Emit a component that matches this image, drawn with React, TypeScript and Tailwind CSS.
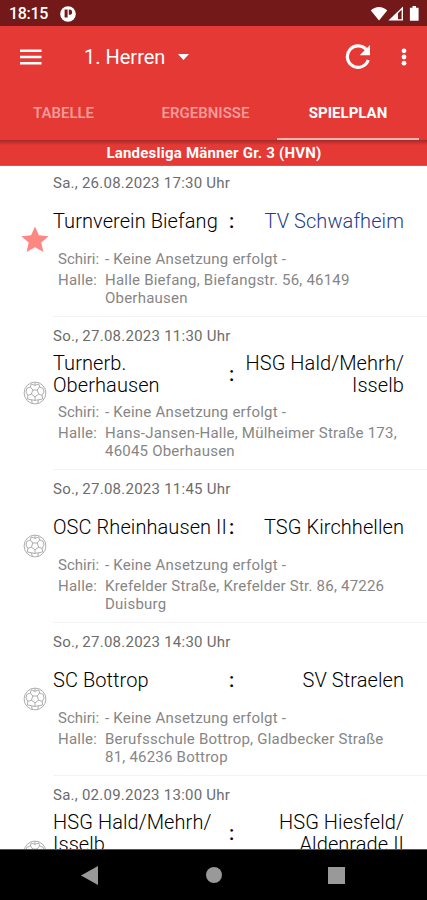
import { clsx } from "clsx";

type Match = {
  date: string;
  home: string[];
  away: string[];
  hall: string[];
  favorite?: boolean;
};

const matches: Match[] = [
  {
    date: "Sa., 26.08.2023 17:30 Uhr",
    home: ["Turnverein Biefang"],
    away: ["TV Schwafheim"],
    hall: ["Halle Biefang, Biefangstr. 56, 46149", "Oberhausen"],
    favorite: true,
  },
  {
    date: "So., 27.08.2023 11:30 Uhr",
    home: ["Turnerb.", "Oberhausen"],
    away: ["HSG Hald/Mehrh/", "Isselb"],
    hall: ["Hans-Jansen-Halle, Mülheimer Straße 173,", "46045 Oberhausen"],
  },
  {
    date: "So., 27.08.2023 11:45 Uhr",
    home: ["OSC Rheinhausen II"],
    away: ["TSG Kirchhellen"],
    hall: ["Krefelder Straße, Krefelder Str. 86, 47226", "Duisburg"],
  },
  {
    date: "So., 27.08.2023 14:30 Uhr",
    home: ["SC Bottrop"],
    away: ["SV Straelen"],
    hall: ["Berufsschule Bottrop, Gladbecker Straße", "81, 46236 Bottrop"],
  },
  {
    date: "Sa., 02.09.2023 13:00 Uhr",
    home: ["HSG Hald/Mehrh/", "Isselb"],
    away: ["HSG Hiesfeld/", "Aldenrade II"],
    hall: [],
  },
];

function StarIcon() {
  return (
    <svg width="28" height="28" viewBox="0 0 28 28" fill="#fe8782">
      <path d="M14 .4l3.9 8.9 9.7.9-7.3 6.4 2.1 9.5-8.4-4.9-8.4 4.9 2.1-9.5L.4 10.2l9.7-.9z" />
    </svg>
  );
}

function BallIcon() {
  return (
    <svg width="24" height="24" viewBox="0 0 24 24" fill="none" stroke="#999" strokeWidth="0.8">
      <circle cx="12" cy="12" r="10.9" />
      <path d="M12 15.8L8.4 13.2 9.8 9h4.4l1.4 4.2z" />
      <path d="M9.8 9L7.4 6M14.2 9l2.4-3M15.6 13.2l3.6 1.2M12 15.8v3.6M8.4 13.2l-3.6 1.2" />
      <path d="M7.4 6L8.2 2.9 12 4.4l3.8-1.5.8 3.1 3.6 1.4M7.4 6L3.8 7.4M12 4.4V1.3M4.8 14.4L3 11l.8-3.6M4.8 14.4L4.4 18l4.2.8 3.4.6 3.4-.6 4.2-.8-.4-3.6L21 11l-.8-3.6M8.6 18.8l.6 3.6M15.4 18.8l-.6 3.6" />
    </svg>
  );
}

function StatusBar() {
  return (
    <div className="flex h-[26px] shrink-0 items-center bg-[#741919] pt-[2px] pl-[9px] pr-[7px] text-white">
      <span className="w-[51px] text-[16px] font-medium leading-none tracking-[-0.3px]">18:15</span>
      <svg width="16" height="16" viewBox="0 0 16 16">
        <circle cx="8" cy="8" r="7.8" fill="#fff" />
        <path d="M4.6 3.6h3v8h-3zM8.8 3.6h.7a2.6 2.6 0 010 5.2h-.7z" fill="#741919" />
      </svg>
      <svg className="ml-auto" width="50" height="16" viewBox="0 0 50 16">
        <path d="M.8 4.6C5-.1 13-.1 17.2 4.6L9 14.4z" fill="#fff" />
        <path d="M18.4 14.6L33 .6v14z" fill="#fff" />
        <path d="M28 7.2l3.6-3.4v9.4H28z" fill="#741919" />
        <path d="M42.5 0h3.5v1.7h2.6v13.1h-8.7V1.7h2.6z" fill="#fff" />
      </svg>
    </div>
  );
}

function Toolbar() {
  return (
    <div className="flex h-[62px] items-center text-white">
      <svg className="ml-[20px]" width="22" height="16" viewBox="0 0 22 16" fill="#fff">
        <path d="M0 .5h21.5V3H0zM0 6.7h21.5v2.5H0zM0 12.9h21.5v2.5H0z" />
      </svg>
      <span className="ml-[42px] w-[94px] whitespace-nowrap text-[20px]">1. Herren</span>
      <svg width="11" height="6" viewBox="0 0 11 6" fill="#fff">
        <path d="M0 0h11L5.5 6z" />
      </svg>
      <svg className="ml-auto" width="26" height="26" viewBox="0 0 26 26">
        <path d="M21.6 6.2A10.7 10.7 0 1023.2 16" fill="none" stroke="#fff" strokeWidth="3.2" />
        <path d="M25 1v10.3H14.7z" fill="#fff" />
      </svg>
      <svg className="ml-[30px] mr-[20px]" width="6" height="20" viewBox="0 0 6 20" fill="#fff">
        <circle cx="3" cy="3.8" r="2.4" />
        <circle cx="3" cy="10" r="2.4" />
        <circle cx="3" cy="16.2" r="2.4" />
      </svg>
    </div>
  );
}

function Tabs() {
  return (
    <div className="flex h-[52px] text-[15px]">
      <div className="flex w-[127px] items-center justify-center pb-[2px] font-semibold text-[#f39a98]">TABELLE</div>
      <div className="flex w-[157px] items-center justify-center pb-[2px] font-semibold text-[#f39a98]">ERGEBNISSE</div>
      <div className="-ml-[7px] flex w-[142px] items-center justify-center border-b-2 border-[#fbb5b3] font-bold text-white">
        SPIELPLAN
      </div>
    </div>
  );
}

function MatchRow({ match, first }: { match: Match; first: boolean }) {
  return (
    <div className={clsx("flex shrink-0", first ? "h-[151px]" : "h-[153px]")}>
      <div className={clsx("flex w-[53px] items-center pl-[21px]", first ? "pb-[4px]" : "pb-[2px]")}>
        {match.favorite ? <StarIcon /> : <span className="pl-[2px]"><BallIcon /></span>}
      </div>
      <div className={clsx("flex-1 border-b border-[#f3f3f3]", first ? "pt-[7px]" : "pt-[9px]")}>
        <p className="h-[20px] text-[15px] leading-[20px] tracking-[0.25px] text-[#6c6c6c]">{match.date}</p>
        <div className="mt-[5px] flex h-[46px] items-center whitespace-nowrap pr-[23px] text-[20px] font-light leading-[22px] tracking-[0.08px] text-black">
          <div className="w-[175px]">
            {match.home.map((line) => <p key={line}>{line}</p>)}
          </div>
          <span className="pl-px font-medium">:</span>
          <div className={clsx("flex-1 text-right", match.favorite && "text-[#263c86]")}>
            {match.away.map((line) => <p key={line}>{line}</p>)}
          </div>
        </div>
        {match.hall.length > 0 && (
          <div className="mt-[6px] pl-[5px] text-[15px] leading-[18px] tracking-[0.22px] text-[#868686]">
            <div className="flex">
              <span className="w-[47px] tracking-normal">Schiri:</span>
              <span>- Keine Ansetzung erfolgt -</span>
            </div>
            <div className="mt-[3px] flex">
              <span className="w-[47px]">Halle:</span>
              <div className="whitespace-nowrap">
                {match.hall.map((line) => <p key={line}>{line}</p>)}
              </div>
            </div>
          </div>
        )}
      </div>
    </div>
  );
}

export default function App() {
  return (
    <div className="flex h-[900px] w-[427px] flex-col overflow-hidden bg-white font-[Roboto,sans-serif]">
      <StatusBar />
      <header className="shrink-0 bg-[#e53935]">
        <Toolbar />
        <Tabs />
        <div className="flex h-[26px] items-center justify-center border-b border-[#ef4a4c] bg-linear-to-b from-[#a32a27] via-[#e53935] via-20% to-[#e53935] pt-[2px] pl-px text-[15px] font-bold tracking-[0.22px] text-white">
          Landesliga Männer Gr. 3 (HVN)
        </div>
      </header>
      <main className="flex min-h-0 flex-1 flex-col overflow-hidden">
        {matches.map((match, i) => <MatchRow key={match.date} match={match} first={i === 0} />)}
      </main>
      <nav className="flex h-[51px] shrink-0 items-center border-t border-[#555] bg-black">
        <svg className="ml-[81px]" width="17" height="19" viewBox="0 0 17 19" fill="#999">
          <path d="M0 9.5L17 0v19z" />
        </svg>
        <div className="ml-[108px] h-[16px] w-[16px] rounded-full bg-[#999]" />
        <div className="ml-[106px] h-[17px] w-[17px] bg-[#999]" />
      </nav>
    </div>
  );
}
